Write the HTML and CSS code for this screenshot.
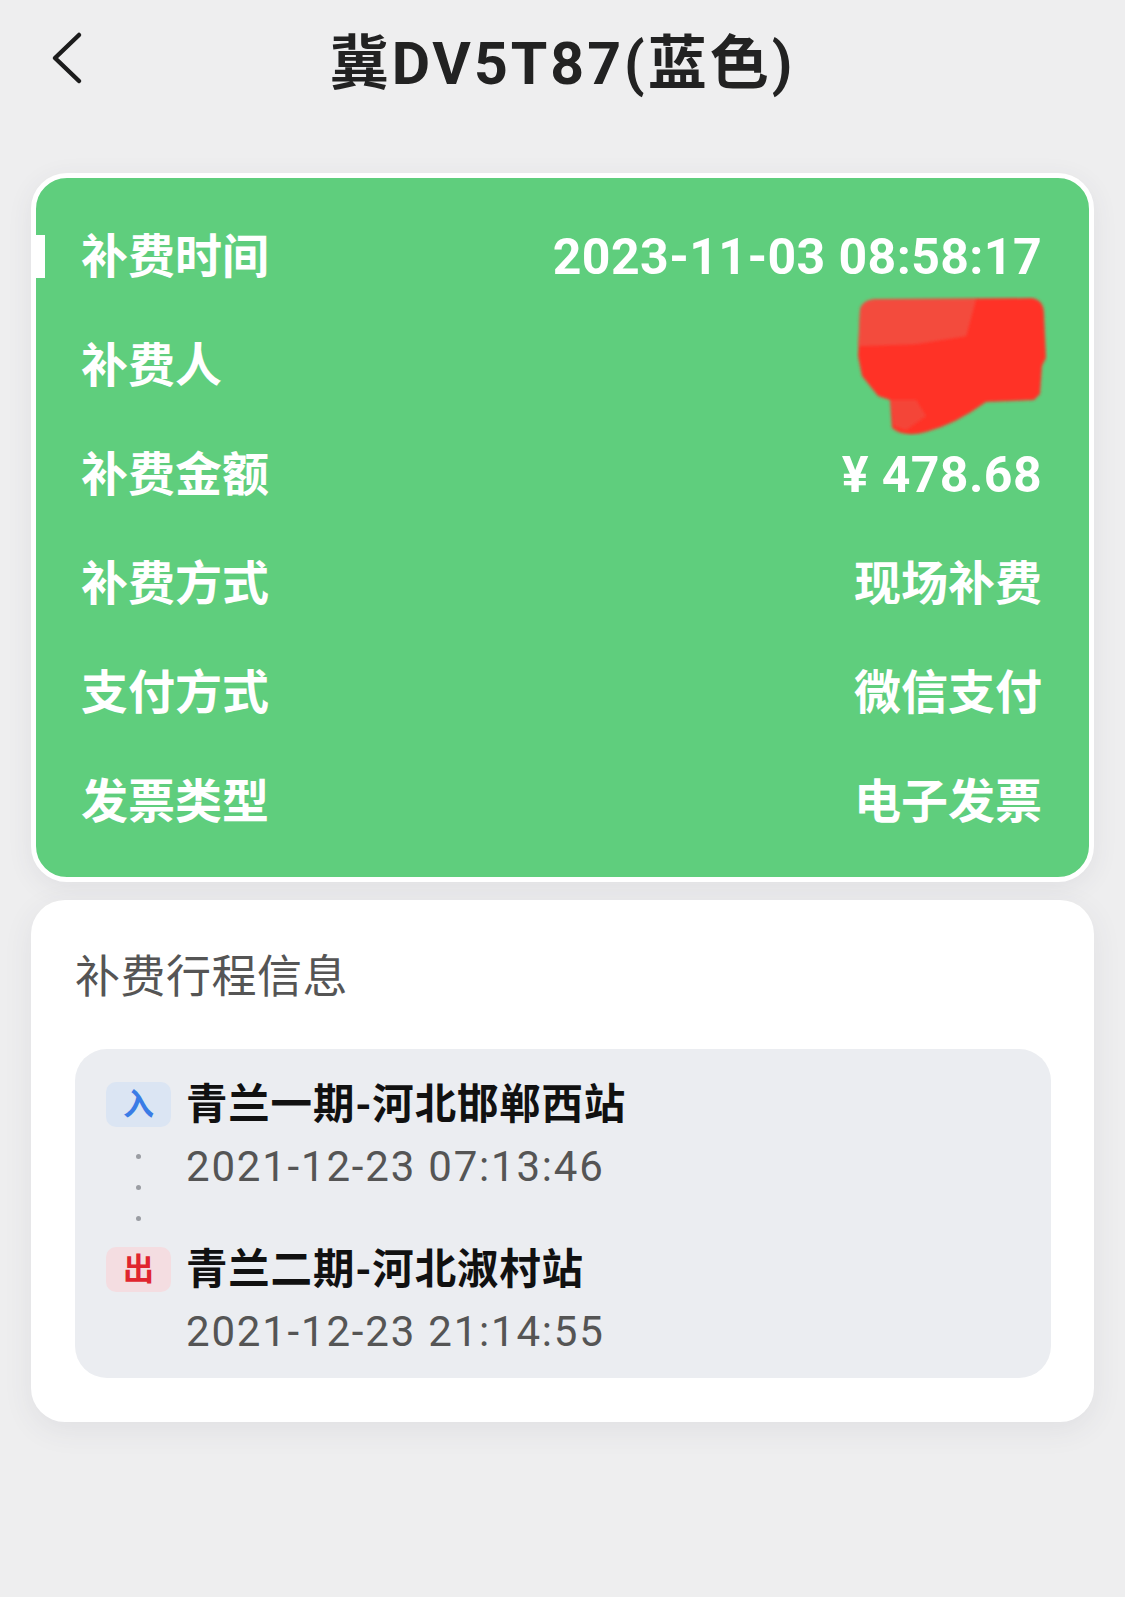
FILE: index.html
```html
<!DOCTYPE html>
<html lang="zh-CN">
<head>
<meta charset="utf-8">
<title>冀DV5T87(蓝色)</title>
<link rel="stylesheet" href="styles.css">
</head>
<body>
<div class="page">
  <header class="topbar">
    <button class="back" aria-label="返回">
      <svg width="40" height="56" viewBox="0 0 40 56"><path d="M33 5 L9 28 L33 51" fill="none" stroke="#1c1c1c" stroke-width="4.5" stroke-linecap="round" stroke-linejoin="round"/></svg>
    </button>
    <h1 class="title">冀DV5T87(蓝色)</h1>
    <span class="spacer"></span>
  </header>

  <section class="summary">
    <div class="row active">
      <span class="label">补费时间</span>
      <span class="value num">2023-11-03 08:58:17</span>
    </div>
    <div class="row">
      <span class="label">补费人</span>
      <span class="value">
        <svg class="redact" width="192" height="140" viewBox="0 0 192 140">
          <defs><filter id="soft" x="-10%" y="-10%" width="120%" height="120%"><feGaussianBlur stdDeviation="1.6"/></filter></defs>
          <g filter="url(#soft)">
            <path d="M4 14 Q6 4 20 3 L176 2 Q188 4 188 18 L190 62 L186 70 L184 98 L178 104 L130 106 Q100 128 70 136 Q48 142 36 132 L34 104 L22 100 L6 80 L2 60 Z" fill="#ff3227"/>
            <path d="M4 14 Q6 4 20 3 L120 3 L110 40 L60 48 L2 50 Z" fill="#f05244" opacity="0.8"/>
            <path d="M34 104 L60 104 L70 120 L50 134 L38 130 Z" fill="#f14a3c" opacity="0.8"/>
          </g>
        </svg>
      </span>
    </div>
    <div class="row">
      <span class="label">补费金额</span>
      <span class="value num">¥ 478.68</span>
    </div>
    <div class="row">
      <span class="label">补费方式</span>
      <span class="value">现场补费</span>
    </div>
    <div class="row">
      <span class="label">支付方式</span>
      <span class="value">微信支付</span>
    </div>
    <div class="row">
      <span class="label">发票类型</span>
      <span class="value">电子发票</span>
    </div>
  </section>

  <section class="trip">
    <h2 class="trip-title">补费行程信息</h2>
    <div class="route">
      <span class="badge badge-in">入</span>
      <div class="stop-name">青兰一期-河北邯郸西站</div>
      <div class="dots"><i></i><i></i><i></i></div>
      <div class="stop-time">2021-12-23 07:13:46</div>
      <span class="badge badge-out">出</span>
      <div class="stop-name">青兰二期-河北淑村站</div>
      <span class="empty"></span>
      <div class="stop-time">2021-12-23 21:14:55</div>
    </div>
  </section>
</div>
</body>
</html>
```

FILE: styles.css
```css
* { box-sizing: border-box; }

html, body {
  margin: 0;
  padding: 0;
  background: #eeeeef;
}

body {
  font-family: Roboto, "Noto Sans CJK SC", sans-serif;
  color: #1c1c1c;
}

.page {
  width: 1125px;
  min-height: 1597px;
  padding: 0 31px;
}

/* header */
.topbar {
  height: 128px;
  display: grid;
  grid-template-columns: 1fr auto 1fr;
  align-items: center;
}

.back {
  justify-self: start;
  margin: -12px 0 0 15px;
  padding: 0;
  border: 0;
  background: none;
  width: 40px;
  height: 56px;
  display: flex;
}

.title {
  margin: 0;
  font-size: 59px;
  line-height: 70px;
  font-weight: 700;
  letter-spacing: 3px;
  color: #222;
}

/* green summary card */
.summary {
  margin-top: 45px;
  border: 5px solid #ffffff;
  border-radius: 36px;
  background: #5fce7d;
  padding: 24px 47px 21px 45px;
  box-shadow: 0 6px 26px rgba(60, 70, 90, 0.08);
}

.row {
  height: 109px;
  display: flex;
  align-items: center;
  color: #ffffff;
  font-weight: 700;
  font-size: 47px;
  line-height: 56px;
}

.row.active::before {
  content: "";
  flex: none;
  width: 9px;
  height: 43px;
  background: #ffffff;
  margin-left: -45px;
  margin-right: 36px;
}

.label {
  flex: 1;
}

.value {
  display: flex;
  align-items: center;
}

.num {
  font-size: 50px;
  letter-spacing: 0.4px;
}

.redact {
  display: block;
  margin-right: -6px;
}

/* trip card */
.trip {
  margin-top: 18px;
  background: #ffffff;
  border-radius: 34px;
  padding: 51px 43px 44px 44px;
  box-shadow: 0 8px 30px rgba(60, 70, 90, 0.08);
}

.trip-title {
  margin: 0 0 45px;
  font-size: 45px;
  line-height: 53px;
  font-weight: 400;
  color: #555555;
  letter-spacing: 0.5px;
}

.route {
  background: #ebedf1;
  border-radius: 32px;
  padding: 33px 31px 21px;
  display: grid;
  grid-template-columns: 65px 1fr;
  grid-template-rows: 45px 120px 45px auto;
  column-gap: 15px;
}

.badge {
  width: 65px;
  height: 45px;
  border-radius: 10px;
  display: flex;
  align-items: center;
  justify-content: center;
  font-size: 31px;
  font-weight: 700;
  line-height: 1;
}

.badge-in {
  background: #dbe5f3;
  color: #3a7ce6;
}

.badge-out {
  background: #f4dde1;
  color: #e0252f;
}

.stop-name {
  font-size: 41.5px;
  line-height: 45px;
  font-weight: 700;
  color: #111111;
  letter-spacing: 0.8px;
}

.stop-time {
  margin-top: 15px;
  font-size: 42px;
  line-height: 50px;
  font-weight: 400;
  color: #555555;
  letter-spacing: 1.8px;
  align-self: start;
}

.dots {
  display: flex;
  flex-direction: column;
  align-items: center;
  justify-content: center;
  gap: 26px;
}

.dots i {
  display: block;
  width: 5px;
  height: 5px;
  border-radius: 50%;
  background: #9a9da3;
}
```
